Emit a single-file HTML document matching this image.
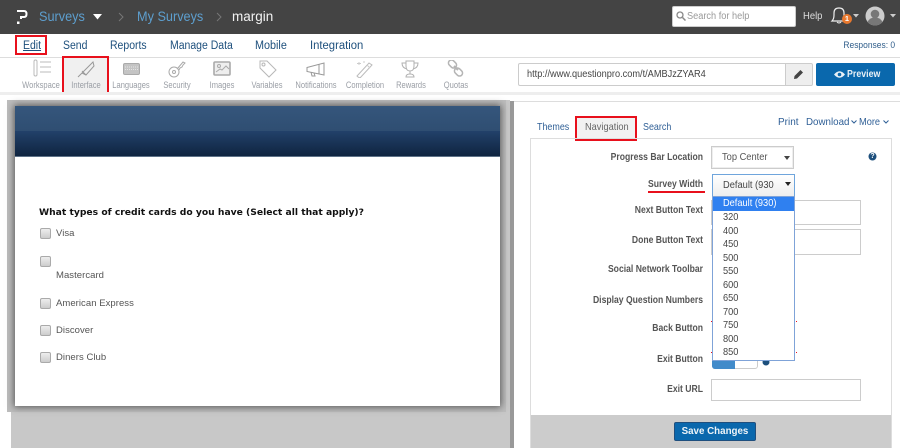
<!DOCTYPE html>
<html><head><meta charset="utf-8"><style>
html,body{margin:0;padding:0;background:#fff}
#p{position:relative;width:900px;height:448px;overflow:hidden;background:#fff;font-family:"Liberation Sans",sans-serif;font-size:11px;color:#444}
#p div,#p span.a,#p svg.a{position:absolute;white-space:nowrap}
.s{transform-origin:left center}
.n{top:39px;font-size:11.5px;color:#1d4f7c;line-height:14px;transform-origin:left center;transform:scaleX(.91)}
.t{top:80px;font-size:9px;color:#9a9ea5;line-height:11px;text-align:center;width:60px;transform:scaleX(.84)}
.l{font-weight:bold;color:#555;font-size:10.5px;text-align:right;width:175px;left:528px;line-height:13px;transform-origin:right center;transform:scaleX(.82)}
.o{left:0;width:80px;padding-left:10px;height:13.5px;line-height:13.5px;font-size:10.5px;color:#444}
.o span{display:inline-block;transform-origin:left center;transform:scaleX(.88)}
.inp{background:#fff;border:1px solid #ccc;box-sizing:border-box}
.cb{left:40px;width:9px;height:9px;border:1px solid #aaa;border-radius:2px;background:linear-gradient(#eee,#ccc)}
.c{left:56px;font-size:9.5px;color:#555;line-height:12px;letter-spacing:.05px}
.r{width:1px;height:1px;background:#e8101c}
</style></head><body><div id="p">

<!-- top bar -->
<div style="left:0;top:0;width:900px;height:34px;background:#444"></div>
<svg class="a" style="left:16px;top:9px" width="12" height="17" viewBox="0 0 12 17"><path d="M1 2h7q2.500 0 2.500 3t-2.500 3H5v2" fill="none" stroke="#fff" stroke-width="2"/><rect x="1" y="12.500" width="2.500" height="2.500" fill="#fff"/></svg>
<div class="s" style="left:39px;top:8px;font-size:13.5px;line-height:17px;color:#5d9fcf;transform:scaleX(.94)">Surveys</div>
<svg class="a" style="left:93px;top:14px" width="9" height="6"><path d="M0 0h9L4.500 5.500z" fill="#fff"/></svg>
<svg class="a" style="left:118px;top:12px" width="6" height="10"><path d="M1 1l4 4-4 4" fill="none" stroke="#777" stroke-width="1"/></svg>
<div class="s" style="left:137px;top:8px;font-size:13.5px;line-height:17px;color:#5d9fcf;transform:scaleX(.94)">My Surveys</div>
<svg class="a" style="left:216px;top:12px" width="6" height="10"><path d="M1 1l4 4-4 4" fill="none" stroke="#777" stroke-width="1"/></svg>
<div class="s" style="left:232px;top:8px;font-size:13.5px;line-height:17px;color:#f2f2f2">margin</div>
<div style="left:672px;top:6px;width:124px;height:21px;background:#fff;border:1px solid #ccc;border-radius:2px;box-sizing:border-box"></div>
<svg class="a" style="left:676px;top:11px" width="10" height="10"><circle cx="4" cy="4" r="3" fill="none" stroke="#888" stroke-width="1.300"/><path d="M6.500 6.500l3 3" stroke="#888" stroke-width="1.500"/></svg>
<div class="s" style="left:687px;top:10px;font-size:10px;line-height:13px;color:#999;transform:scaleX(.92)">Search for help</div>
<div class="s" style="left:803px;top:10px;font-size:10.5px;line-height:13px;color:#ddd;transform:scaleX(.9)">Help</div>
<svg class="a" style="left:830px;top:5px" width="20" height="20" viewBox="0 0 20 20"><path d="M2 16q2-2 2-6V8q0-5 5-5t5 5v2q0 4 2 6z" fill="none" stroke="#eee" stroke-width="1.200"/><path d="M7 17q2 2 4 0" fill="none" stroke="#eee"/></svg>
<div style="left:842px;top:14px;width:10px;height:10px;border-radius:5px;background:#e8792f;color:#fff;font-size:7.5px;line-height:10px;text-align:center;font-weight:bold">1</div>
<svg class="a" style="left:853px;top:14px" width="6" height="4"><path d="M0 0h6L3 3.500z" fill="#ccc"/></svg>
<svg class="a" style="left:865px;top:6px" width="20" height="20" viewBox="0 0 20 20"><circle cx="10" cy="10" r="9.500" fill="#ccc"/><circle cx="10" cy="8" r="4.300" fill="#777"/><path d="M2.500 16q2-4.500 7.500-4.500t7.500 4.500q-3 3.500-7.500 3.500t-7.500-3.500z" fill="#777"/></svg>
<svg class="a" style="left:890px;top:14px" width="6" height="4"><path d="M0 0h6L3 3.500z" fill="#ccc"/></svg>

<!-- nav -->
<div class="n" style="left:23px;text-decoration:underline">Edit</div>
<div style="left:15px;top:35px;width:32px;height:20px;border:2px solid #e8101c;box-sizing:border-box"></div>
<div class="n" style="left:63px">Send</div>
<div class="n" style="left:110px">Reports</div>
<div class="n" style="left:170px">Manage Data</div>
<div class="n" style="left:255px;transform:scaleX(.94)">Mobile</div>
<div class="n" style="left:310px;transform:scaleX(.98)">Integration</div>
<div style="right:5px;top:40px;font-size:9.5px;line-height:12px;color:#2f5d8a;transform-origin:right center;transform:scaleX(.89)">Responses: 0</div>
<div style="left:0;top:57px;width:900px;height:1px;background:#ddd"></div>

<!-- toolbar -->
<div style="left:62px;top:56px;width:47px;height:38px;background:#f0f0f0;border:2px solid #e8101c;box-sizing:border-box"></div>
<svg class="a" style="left:32px;top:59px" width="20" height="20" fill="none" stroke="#bbb"><rect x="2" y="1" width="3" height="16" rx="1.500"/><path d="M8 3h11M8 8h11M8 13h11"/></svg>
<svg class="a" style="left:77px;top:60px" width="18" height="18" fill="none" stroke="#999"><path d="M1 17L16 2l1 4-8 9-4-2-2 2z"/><path d="M5 11l4 4"/></svg>
<svg class="a" style="left:123px;top:63px" width="17" height="12"><rect x=".5" y=".5" width="16" height="11" rx="1.500" fill="#c4c4c4" stroke="#aaa"/><path d="M2 4h13M2 6.500h13" stroke="#e4e4e4" stroke-dasharray="1 1"/></svg>
<svg class="a" style="left:168px;top:60px" width="18" height="18" fill="none" stroke="#aaa"><circle cx="6" cy="12" r="5"/><circle cx="6" cy="12" r="1.500"/><path d="M9.500 8.500L15 2l2 1-2 2-1 2-2 1-1 2"/></svg>
<svg class="a" style="left:213px;top:61px" width="18" height="15"><rect x="1" y="1" width="16" height="13" rx="1" fill="#eee" stroke="#aaa" stroke-width="1.600"/><path d="M3 11l4-3 2 1 4-4 3 3" fill="none" stroke="#aaa"/><circle cx="6" cy="5" r="1.500" fill="none" stroke="#aaa"/></svg>
<svg class="a" style="left:258px;top:59px" width="19" height="19" fill="none" stroke="#b8b8b8"><path d="M2 2h7l9 9-7 7-9-9z"/><circle cx="5.500" cy="5.500" r="1.500"/></svg>
<svg class="a" style="left:306px;top:62px" width="19" height="15" fill="none" stroke="#999"><path d="M1 5.500L18 1v12L1 9.500z"/><path d="M13 2.500v9M5 10l1 4h3l-1-3"/></svg>
<svg class="a" style="left:356px;top:60px" width="18" height="18" fill="none" stroke="#bbb"><path d="M2 17l-1-1L13 3l3 2L4 18z"/><path d="M11 5l3 3M3 2v3M1 3.500h4M8 1v2" stroke="#ccc"/></svg>
<svg class="a" style="left:401px;top:60px" width="18" height="19" fill="none" stroke="#b0b0b0"><path d="M5 1h8v5q0 5-4 5T5 6zM5 3H1q0 5 5 6M13 3h4q0 5-5 6M9 11v3M5 17q0-3 4-3t4 3z"/></svg>
<svg class="a" style="left:447px;top:60px" width="18" height="18" fill="none" stroke="#b5b5b5" stroke-width="1.500"><rect x="1" y="1" width="9" height="6" rx="3" transform="rotate(45 5.500 4)"/><rect x="7" y="9" width="9" height="6" rx="3" transform="rotate(45 11.500 12)"/><path d="M7 6l4 4" stroke-width="2"/></svg>

<div class="t" style="left:11px">Workspace</div>
<div class="t" style="left:56px">Interface</div>
<div class="t" style="left:101px">Languages</div>
<div class="t" style="left:147px">Security</div>
<div class="t" style="left:192px">Images</div>
<div class="t" style="left:237px">Variables</div>
<div class="t" style="left:286px">Notifications</div>
<div class="t" style="left:335px">Completion</div>
<div class="t" style="left:381px">Rewards</div>
<div class="t" style="left:426px">Quotas</div>

<div style="left:518px;top:63px;width:268px;height:23px;border:1px solid #ccc;border-radius:2px 0 0 2px;box-sizing:border-box;background:#fff"></div>
<div class="s" style="left:527px;top:68px;font-size:10px;line-height:13px;color:#444;transform:scaleX(.92)">http://www.questionpro.com/t/AMBJzZYAR4</div>
<div style="left:785px;top:63px;width:28px;height:23px;background:#eee;border:1px solid #ccc;border-radius:0 2px 2px 0;box-sizing:border-box"></div>
<svg class="a" style="left:793px;top:69px" width="11" height="11"><path d="M1 10l.5-3L7.500 1l2.500 2.500L4 9.500z" fill="#444"/></svg>
<div style="left:816px;top:63px;width:79px;height:23px;background:#0a68ad;border-radius:2px"></div>
<svg class="a" style="left:834px;top:70px" width="11" height="9"><path d="M0 4.500Q5.500-2 11 4.500 5.500 11 0 4.500z" fill="#e8f0f6"/><circle cx="5.500" cy="4.500" r="1.800" fill="#0a68ad"/></svg>
<div class="s" style="left:847px;top:67px;font-size:10.5px;line-height:14px;font-weight:bold;color:#e8f0f6;transform:scaleX(.84)">Preview</div>
<div style="left:0;top:92px;width:900px;height:3px;background:#eee"></div>

<!-- left pane -->
<div style="left:7px;top:100px;width:499px;height:312px;background:#bdbdbd"></div>
<div style="left:11px;top:412px;width:499px;height:36px;background:#c8c8c8"></div>
<div style="left:506px;top:100px;width:4px;height:312px;background:#c8c8c8"></div>
<div style="left:510px;top:101px;width:4px;height:347px;background:#999"></div>
<div style="left:15px;top:106px;width:485px;height:300px;background:#fff;box-shadow:0 0 7px 1px #555"></div>
<div style="left:15px;top:106px;width:485px;height:25px;background:linear-gradient(#35567c,#2f4e72)"></div>
<div style="left:15px;top:131px;width:485px;height:25px;background:linear-gradient(#22416a,#0f2440)"></div>
<div style="left:15px;top:156px;width:485px;height:1px;background:#5e7288"></div>
<div style="left:39px;top:206px;font-family:'DejaVu Sans',sans-serif;font-weight:bold;font-size:9.2px;line-height:13px;color:#111">What types of credit cards do you have (Select all that apply)?</div>
<div class="cb" style="top:228px"></div><div class="c" style="top:228px">Visa</div>
<div class="cb" style="top:256px"></div><div class="c" style="top:270px">Mastercard</div>
<div class="cb" style="top:298px"></div><div class="c" style="top:298px">American Express</div>
<div class="cb" style="top:325px"></div><div class="c" style="top:325px">Discover</div>
<div class="cb" style="top:352px"></div><div class="c" style="top:352px">Diners Club</div>

<!-- right pane -->
<div style="left:514px;top:101px;width:386px;height:1px;background:#ddd"></div>
<div class="s" style="left:537px;top:121px;font-size:10.5px;line-height:13px;color:#2f5f96;transform:scaleX(.85)">Themes</div>
<div style="left:575px;top:116px;width:62px;height:25px;background:#f2f2f2;border:2px solid #e8101c;box-sizing:border-box"></div>
<div class="s" style="left:585px;top:121px;font-size:10.5px;line-height:13px;color:#666;transform:scaleX(.88)">Navigation</div>
<div class="s" style="left:643px;top:121px;font-size:10.5px;line-height:13px;color:#2f5f96;transform:scaleX(.85)">Search</div>
<div class="s" style="left:778px;top:116px;font-size:10.5px;line-height:13px;color:#2f5f96;transform:scaleX(.95)">Print</div>
<div class="s" style="left:806px;top:116px;font-size:10.5px;line-height:13px;color:#2f5f96;transform:scaleX(.93)">Download</div>
<svg class="a" style="left:851px;top:120px" width="6" height="4"><path d="M.5.500L3 3l2.500-2.500" fill="none" stroke="#2f5f96"/></svg>
<div class="s" style="left:859px;top:116px;font-size:10.5px;line-height:13px;color:#2f5f96;transform:scaleX(.88)">More</div>
<svg class="a" style="left:883px;top:120px" width="6" height="4"><path d="M.5.500L3 3l2.500-2.500" fill="none" stroke="#2f5f96"/></svg>

<div style="left:530px;top:138px;width:362px;height:310px;border:1px solid #ddd;border-bottom:none;box-sizing:border-box"></div>
<div style="left:531px;top:415px;width:360px;height:33px;background:#ccc"></div>
<div style="left:674px;top:422px;width:82px;height:19px;background:#0a68ad;border:1px solid #1f4f7e;border-radius:2px;box-sizing:border-box"></div>
<div style="left:674px;top:423px;width:82px;line-height:17px;color:#eef4f8;font-weight:bold;font-size:10.5px;text-align:center;transform:scaleX(.93)">Save Changes</div>

<div class="l" style="top:151px">Progress Bar Location</div>
<div class="l" style="top:178px">Survey Width</div>
<div style="left:648px;top:191px;width:57px;height:2px;background:#e8101c"></div>
<div class="l" style="top:204px">Next Button Text</div>
<div class="l" style="top:234px">Done Button Text</div>
<div class="l" style="top:263px">Social Network Toolbar</div>
<div class="l" style="top:294px">Display Question Numbers</div>
<div class="l" style="top:322px">Back Button</div>
<div class="l" style="top:353px">Exit Button</div>
<div class="l" style="top:383px">Exit URL</div>

<div class="inp" style="left:711px;top:146px;width:83px;height:23px;box-shadow:0 0 0 1px #eee inset"></div>
<div class="s" style="left:722px;top:151px;font-size:10px;line-height:13px;color:#555;transform:scaleX(.93)">Top Center</div>
<svg class="a" style="left:784px;top:156px" width="6" height="4"><path d="M0 0h6L3 4z" fill="#444"/></svg>
<svg class="a" style="left:868px;top:152px" width="9" height="9"><circle cx="4.500" cy="4.500" r="4" fill="#1d4f7c"/></svg>
<div style="left:868px;top:152px;width:9px;height:9px;font-size:7px;line-height:9px;text-align:center;color:#fff;font-weight:bold">?</div>

<div class="inp" style="left:711px;top:200px;width:150px;height:25px"></div>
<div class="inp" style="left:711px;top:229px;width:150px;height:26px"></div>
<div class="inp" style="left:711px;top:379px;width:150px;height:22px"></div>
<div style="left:712px;top:354px;width:46px;height:15px;background:#fff;border:1px solid #ccc;border-radius:3px;box-sizing:border-box"></div>
<div style="left:712px;top:354px;width:23px;height:15px;background:#428bca;border-radius:3px 0 0 3px"></div>
<svg class="a" style="left:762px;top:358px" width="8" height="8"><circle cx="4" cy="4" r="3.500" fill="#1d4f7c"/></svg>
<div class="r" style="left:711px;top:321px"></div><div class="r" style="left:796px;top:321px"></div>
<div class="r" style="left:711px;top:352px"></div><div class="r" style="left:796px;top:352px"></div>

<!-- select open -->
<div style="left:712px;top:174px;width:83px;height:23px;background:linear-gradient(#fff,#eee);border:1px solid #6fa5dc;box-sizing:border-box"></div>
<div class="s" style="left:723px;top:179px;font-size:10px;line-height:13px;color:#444;transform:scaleX(.93)">Default (930</div>
<svg class="a" style="left:785px;top:182px" width="6" height="4"><path d="M0 0h6L3 4z" fill="#222"/></svg>
<div style="left:712px;top:196px;width:83px;height:165px;background:#fff;border:1px solid #7fa3d8;box-sizing:border-box;overflow:hidden">
<div class="o" style="top:0;background:#2f80f0;color:#fff;height:14px"><span>Default (930)</span></div>
<div class="o" style="top:14px"><span>320</span></div>
<div class="o" style="top:27.5px"><span>400</span></div>
<div class="o" style="top:41px"><span>450</span></div>
<div class="o" style="top:54.5px"><span>500</span></div>
<div class="o" style="top:68px"><span>550</span></div>
<div class="o" style="top:81.5px"><span>600</span></div>
<div class="o" style="top:95px"><span>650</span></div>
<div class="o" style="top:108.5px"><span>700</span></div>
<div class="o" style="top:122px"><span>750</span></div>
<div class="o" style="top:135.5px"><span>800</span></div>
<div class="o" style="top:149px"><span>850</span></div>
</div>
</div></body></html>
